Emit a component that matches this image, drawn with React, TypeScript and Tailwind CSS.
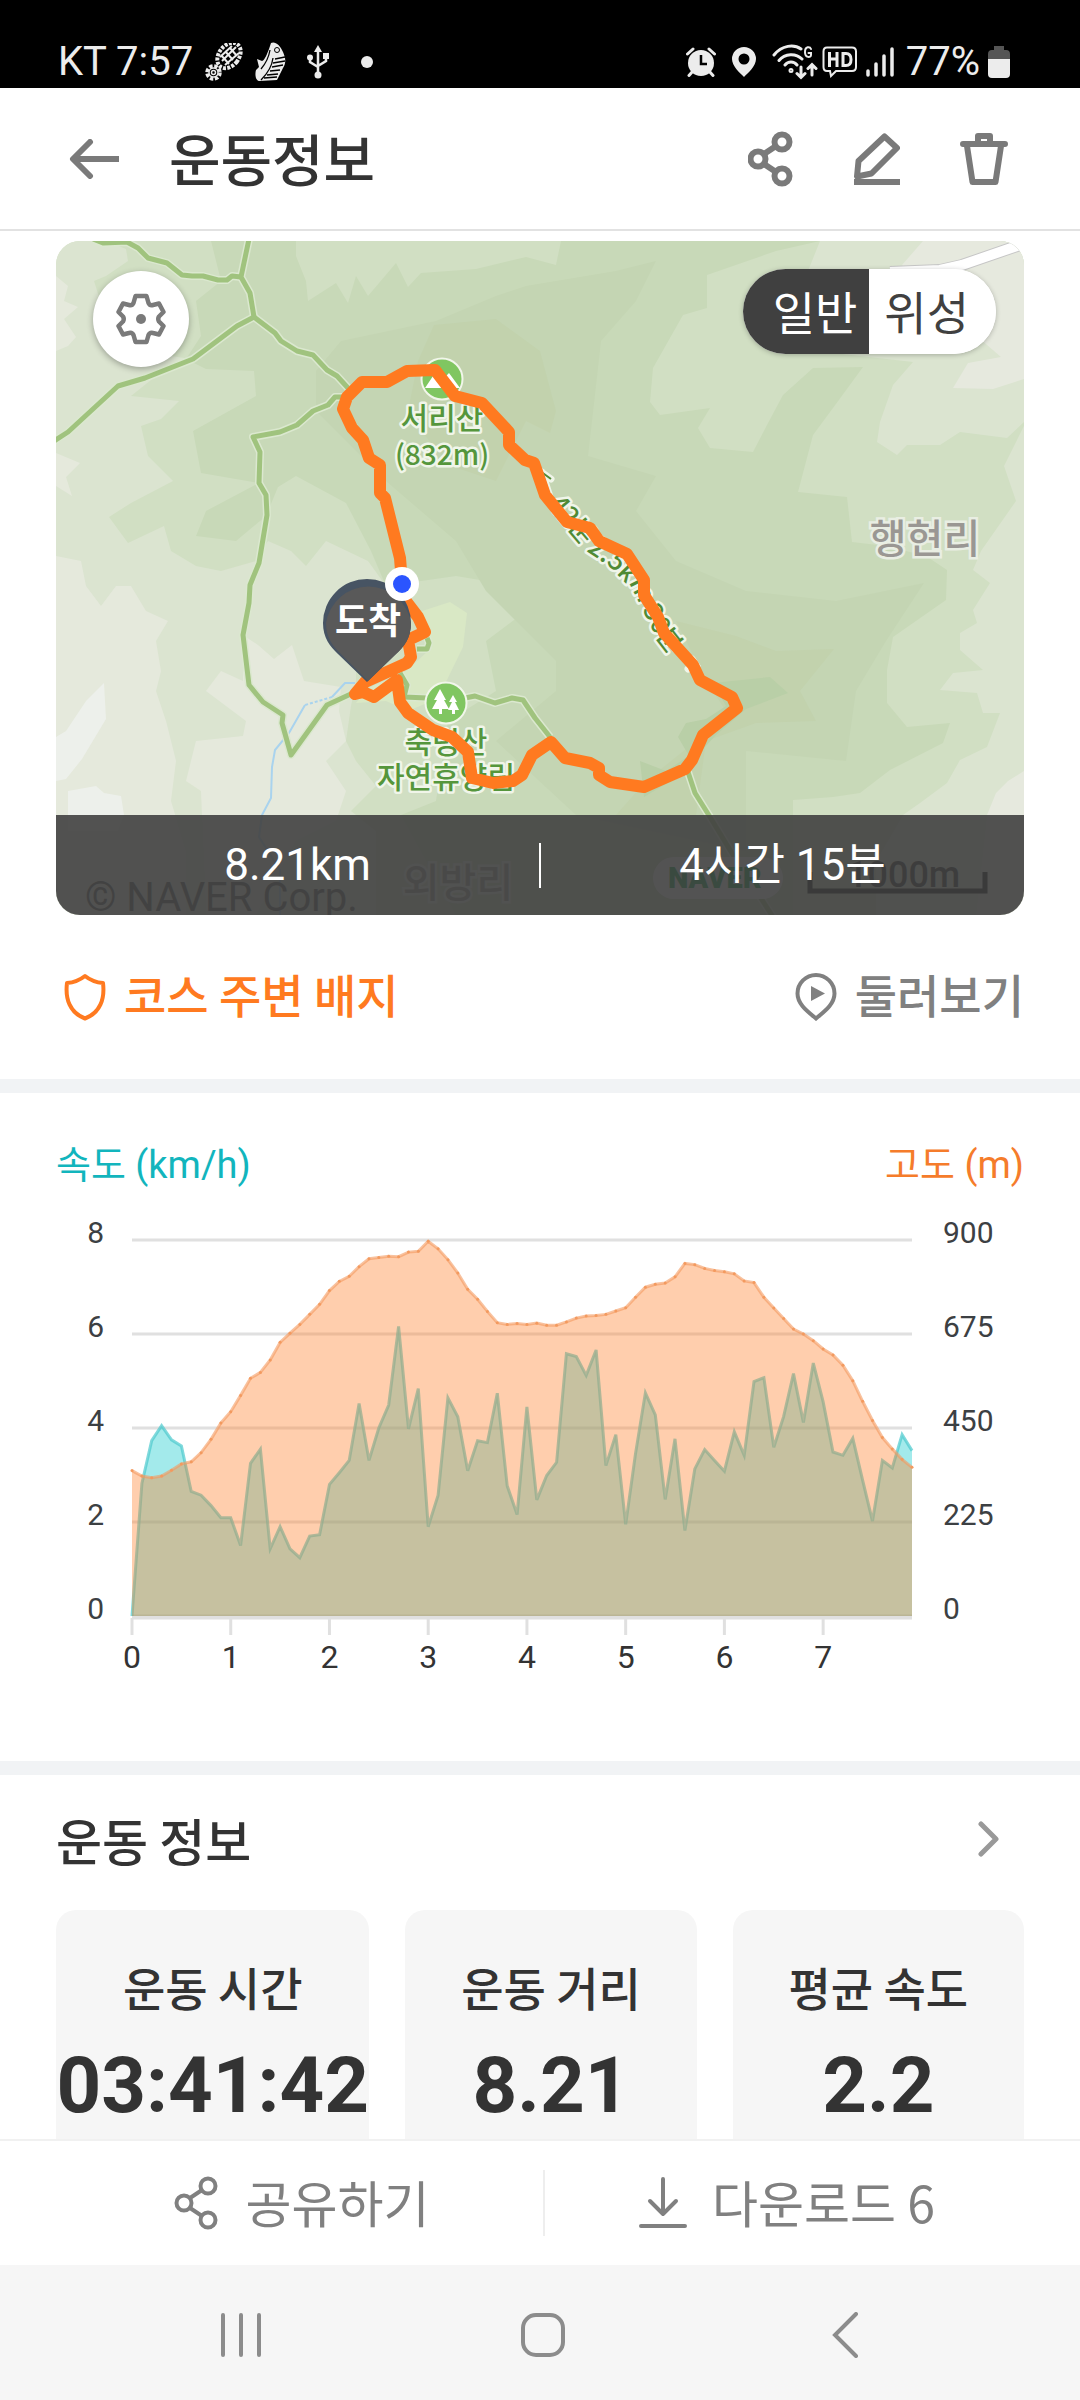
import { useState } from "react"

const speeds = [
  0, 2.82, 3.73, 4.05, 3.75, 3.62, 2.65, 2.57, 2.35, 2.09, 2.09, 1.5, 3.25, 3.55, 1.43, 1.9, 1.43, 1.24, 1.7, 1.73,
  2.8, 3.05, 3.31, 4.52, 3.31, 4, 4.49, 6.16, 3.98, 4.84, 1.9, 2.57, 4.64, 4.24, 3.09, 3.73, 3.69, 4.74, 2.77, 2.16,
  4.45, 2.47, 2.99, 3.27, 5.58, 5.52, 5.12, 5.66, 3.2, 3.86, 1.95, 3.45, 4.75, 4.28, 2.48, 3.77, 1.82, 3.13, 3.54, 3.31,
  3.08, 3.92, 3.42, 4.99, 5.07, 3.59, 4.24, 5.16, 4.12, 5.38, 4.56, 3.49, 3.42, 3.78, 2.89, 2.02, 3.31, 3.15, 3.86, 3.52,
]

const altitudes = [
  348, 335, 331, 335, 349, 364, 369, 391, 423, 462, 489, 528, 569, 583, 613, 655, 677, 698, 722, 746,
  779, 801, 813, 836, 855, 858, 861, 860, 871, 873, 897, 879, 853, 821, 782, 758, 729, 702, 698, 700,
  698, 701, 696, 696, 704, 713, 718, 719, 722, 730, 738, 763, 787, 794, 797, 812, 844, 841, 832, 827,
  824, 819, 802, 798, 763, 737, 712, 687, 675, 659, 639, 625, 600, 563, 514, 468, 427, 400, 375, 356,
]

const yTicks = [
  { speed: 8, altitude: 900 },
  { speed: 6, altitude: 675 },
  { speed: 4, altitude: 450 },
  { speed: 2, altitude: 225 },
  { speed: 0, altitude: 0 },
]

const stats = [
  { label: "운동 시간", value: "03:41:42" },
  { label: "운동 거리", value: "8.21" },
  { label: "평균 속도", value: "2.2" },
]

const terrain = [
  // low ground, west
  { fill: "#dbe4d0", d: "M0 0H50L70 8L72 20L50 35L38 40L45 62L95 112L135 118L100 135L75 155L123 160L105 178L85 185L92 215L117 240L75 262L53 276L72 302L108 285L115 310L140 325L165 330L200 320L212 300L235 310L250 325L270 300L312 320L330 345L330 380L300 400V440L295 465L290 500L300 520L320 545L295 570L320 590V674H0Z" },
  { fill: "#e5e9dc", d: "M0 35L12 45L8 60L22 66L8 78L20 96L12 105L0 110ZM0 212L24 222L10 236L16 255L0 245ZM0 315L25 320L30 345L45 365L60 345L75 345L90 370L112 380L100 400L105 430L100 450L110 480L120 520L115 560L130 610V674H0Z" },
  { fill: "#e5e9dc", d: "M187 394L202 404L218 418L236 404L248 440L285 446L283 470L290 500L270 520L290 550L280 580L240 600L200 674H150L145 550L130 540L140 500L187 495L190 480L150 450L165 430L187 440Z" },
  { fill: "#edf0eb", d: "M0 496L10 490L30 460L48 442L50 478L26 518L10 538L0 540ZM12 550L40 545L48 552L65 555L68 574L62 590H12Z" },
  // forest, centre
  { fill: "#c8d9b8", d: "M155 0H240V15L250 40L252 60L280 42L292 62L300 35L312 55L340 22L352 46L365 32L420 28L470 16L500 24L505 0H764L720 10L651 34V67L627 74L597 127L594 161L604 174L654 167L642 187L654 207L697 211L711 184L727 154L757 127L807 126L777 167L757 194L742 251L791 256L796 301L830 305L870 315L891 329L890 359L837 396L831 429V462L851 486L894 482L887 502L834 529L804 552L777 556L737 559V674H400L345 574L380 560L392 480L440 450L430 400L470 370L460 345L400 335L330 345L315 310L290 262L240 235L222 246L210 275L180 300L140 295L150 270L203 242L145 232L137 190L200 155L198 130L150 128L130 118L145 95L140 60L165 40Z" },
  { fill: "#c4d5b3", d: "M260 170V130L285 100L380 80L440 55L470 45L560 30L600 20L580 60L545 100L536 180L532 215L600 235L580 270L620 320L690 350L780 360L868 342L830 400L800 450L790 520L690 510L690 610L520 574L440 500L500 450L500 420L430 350L400 300L330 240Z" },
  { fill: "#c2d2ad", d: "M378 84L440 78L484 110L500 170L494 192L470 180L440 240L395 225L365 190L352 170L362 120ZM620 380L680 395L720 410L778 408L744 450L760 480L700 482L650 500L640 574H560L590 540L640 500L670 470L650 440Z" },
  { fill: "#b9cfa7", d: "M657 442L714 436L732 452L690 468L660 494L636 520L622 496L630 482L650 478L670 465ZM584 520L610 530L640 510L632 530L588 556Z" },
  // low ground, east
  { fill: "#dbe4d0", d: "M764 0L740 60L760 110L857 121L837 144L824 181L821 201L841 214L851 204H884L904 191L951 197L968 181V0ZM968 185L948 225L960 260L925 310L917 329L934 342L917 369L921 382L904 392V409L927 429L897 432L884 449L921 452L927 472H944L931 506L904 519L891 542L864 562L847 574L820 620V674H968Z" },
  { fill: "#e6e9de", d: "M867 0L846 24L880 60L945 116L912 122L897 147L937 148L968 138V0ZM968 530L952 540L940 552L931 574L920 674H968Z" },
  { fill: "#d9e8c5", d: "M360 372L394 361L411 372L407 406L391 439L371 462L352 470L330 460L300 462L310 448L350 430L372 410Z" },
]

const trails = [
  "M37 -2L47 2L71 1L82 7L92 17L111 22L126 34L136 35H147L162 39H171L176 35L185 36",
  "M193 -2L185 36L194 52L198 76",
  "M198 76L181 85L137 118L89 137L62 145L12 191L-2 200",
  "M198 76L219 92L225 100L241 110L257 114L271 129L281 135L292 147",
  "M291 156H279L272 164L257 170L241 184L224 191L197 196L204 211L203 242L210 254L211 274L203 322L194 344L193 362L187 394L193 444L207 461L227 474L226 482L235 514L271 464L297 452",
  "M361 408H371L373 402L371 397",
  "M344 432L351 444L348 456L371 457H409L419 455L439 462L456 457L467 459L479 477L494 496",
  "M632 531L639 552L654 576L674 609L717 676",
  "M681 467L647 497",
]

const route =
  "M346 342L344 317L329 257L324 252V224L313 217L307 199L296 187L287 168L291 156L306 141H331L351 130L379 129L399 155L426 162L453 191V204L469 219L478 222L489 254L511 281L534 287L543 300L571 313L588 339V354L602 376L608 392L637 424L644 439L676 456L681 467L647 494L636 519L629 528L588 546L554 541L543 534V527L534 522L509 517L495 501L476 514L466 534L457 540L437 542L416 537L412 511L396 496L377 489L352 472L344 461L341 439L318 456L307 451L299 453L309 441L351 422L355 416L352 399L369 391L362 376L349 359Z"

function ShareIcon({ className, strokeWidth }: { className: string; strokeWidth: number }) {
  return (
    <svg viewBox="0 0 46 56" className={className} fill="none" stroke="currentColor" strokeWidth={strokeWidth}>
      <circle cx="34" cy="11" r="7.5" />
      <circle cx="10" cy="28" r="7.5" />
      <circle cx="34" cy="45" r="7.5" />
      <path d="M16 23L28 15M16 33L28 41" />
    </svg>
  )
}

function StatusBar() {
  return (
    <div className="flex h-[88px] shrink-0 items-center justify-between bg-black pt-9 pl-[58px] pr-[70px] font-[Roboto,sans-serif] text-[40px] leading-none text-[#ececec]">
      <div className="flex items-center">
        <span>KT 7:57</span>
        {/* Boot print */}
        <svg viewBox="0 0 38 38" className="ml-3 h-[38px] w-[38px]" fill="none" stroke="currentColor">
          <ellipse cx="24" cy="12.500" rx="10" ry="14" transform="rotate(38 24 12.5)" strokeWidth="4" strokeDasharray="3 1.300" />
          <path d="M17 18L31 4M15 14L27 3M20 22L34 10M20 8L28 17M25 5L32 13M16 12L24 21" strokeWidth="2" />
          <circle cx="8.500" cy="29.500" r="6.500" strokeWidth="3.500" strokeDasharray="3.400 1.700" />
          <circle cx="8.500" cy="29.500" r="4.500" strokeWidth="1.500" />
          <circle cx="8.500" cy="29.500" r="2" strokeWidth="1.500" />
        </svg>
        {/* Shoe */}
        <svg viewBox="0 0 32 40" className="ml-3 h-10 w-8">
          <path d="M16 1C20 -1 25 3 28 10C31 17 31 21 28 26L22 38L4 39C0 38 0 31 1 28L4 25L2 17L7 19C10 18 12 12 14 7Z" fill="currentColor" />
          <path d="M18 16C17 24 12 32 6 38M15 8C14 14 12 20 6 27M20 17L30 15M18 21L30 19M17 25L28 23M15 29L25 28M12 33L23 32M9 36L22 35" fill="none" stroke="#000" strokeWidth="1.300" />
          <circle cx="22" cy="8" r="2.500" fill="none" stroke="#000" />
        </svg>
        {/* USB */}
        <svg viewBox="0 0 22 34" className="ml-5 h-[34px] w-[22px]" fill="currentColor">
          <path d="M11 0L15 7H7Z" />
          <circle cx="11" cy="30" r="3.500" />
          <circle cx="3" cy="12.500" r="3" />
          <rect x="16" y="8" width="6" height="6" />
          <path d="M11 5V29M3 12V17L11 22M19 12V16L11 21" fill="none" stroke="currentColor" strokeWidth="2.500" />
        </svg>
        <span className="ml-8 h-3 w-3 rounded-full bg-[#ececec]" />
      </div>

      <div className="flex items-center">
        {/* Alarm */}
        <svg viewBox="0 0 30 30" className="h-[30px] w-[30px]">
          <circle cx="15" cy="16" r="13" fill="currentColor" />
          <path d="M1.500 7L7 2M28.500 7L23 2M3 28.500L7 24M27 28.500L23 24" stroke="currentColor" strokeWidth="3" strokeLinecap="round" />
          <path d="M15 8V17H21" fill="none" stroke="#000" strokeWidth="2.500" />
        </svg>
        {/* Location */}
        <svg viewBox="0 0 24 30" className="ml-4 h-[30px] w-6" fill="currentColor" fillRule="evenodd">
          <path d="M12 0A12 12 0 0 1 24 12C24 19 16 26 12 30C8 26 0 19 0 12A12 12 0 0 1 12 0ZM12 6.500A5.500 5.500 0 1 0 12 17.500A5.500 5.500 0 1 0 12 6.500Z" />
        </svg>
        {/* Wi-Fi */}
        <svg viewBox="0 0 46 36" className="ml-4 h-9 w-[46px]" fill="none" stroke="currentColor" strokeWidth="3" strokeLinecap="round">
          <path d="M2 11C10 1 22 0 29 5M7 16.500C13 9 24 9 30 15M13 21C16 17 22 17 25 21" />
          <circle cx="19" cy="26.500" r="1" />
          <path d="M39 5C38 2.500 33 2 33 8C33 14 39 14 39 11V9H36.500" strokeWidth="2" />
          <path d="M29 23V33M25 29.500L29 33.500L33 29.500M40 31V21M36 24.500L40 20.500L44 24.500" />
        </svg>
        {/* HD voice */}
        <svg viewBox="0 0 36 32" className="ml-1 h-8 w-9" fill="none" stroke="currentColor">
          <path d="M5 1.500H30Q34 1.500 34 5.500V21Q34 25 30 25H14L9 30L8 25H5Q1.500 25 1.500 21V5.500Q1.500 1.500 5 1.500Z" strokeWidth="2" />
          <path d="M7.500 6V21M15 6V21M7.500 13H15M21 7.500V19.500H24Q29 19.500 29 13.500Q29 7.500 24 7.500Z" strokeWidth="3" />
        </svg>
        {/* Signal */}
        <svg viewBox="0 0 28 30" className="ml-2 h-[30px] w-7" stroke="currentColor" strokeWidth="3.500" strokeLinecap="round">
          <path d="M2 24V28M10 17V28M18 9V28M26 2V28" />
        </svg>
        <span className="ml-3">77%</span>
        {/* Battery */}
        <svg viewBox="0 0 22 32" className="ml-2 h-8 w-[22px]">
          <path d="M6 0H16V4H18Q22 4 22 8V13H0V8Q0 4 4 4H6Z" fill="#555" />
          <path d="M0 13H22V28Q22 32 18 32H4Q0 32 0 28Z" fill="currentColor" />
        </svg>
      </div>
    </div>
  )
}

function Header() {
  return (
    <header className="flex h-[143px] shrink-0 items-center border-b-2 border-[#e2e2e2] pl-[69px] pr-[72px] text-[#7a7a7a]">
      <button type="button" aria-label="뒤로">
        <svg viewBox="0 0 50 40" className="h-10 w-[50px]" fill="none" stroke="currentColor" strokeWidth="6">
          <path d="M50 20H6" />
          <path d="M21 3L4 20L21 37" strokeLinecap="round" strokeLinejoin="round" />
        </svg>
      </button>
      <h1 className="ml-[50px] flex-1 pb-1 text-[56px] leading-[80px] font-medium text-[#333]">운동정보</h1>
      <div className="flex items-center gap-[60px]">
        <button type="button" aria-label="공유">
          <ShareIcon className="h-14 w-[46px]" strokeWidth={6} />
        </button>
        <button type="button" aria-label="수정">
          <svg viewBox="0 0 46 52" className="h-[52px] w-[46px]" fill="none" stroke="currentColor" strokeWidth="6" strokeLinejoin="round">
            <path d="M30.500 3.500L43 15L17.500 40.500L3 43.500L4.500 28Z" />
            <path d="M0 49H46" />
          </svg>
        </button>
        <button type="button" aria-label="삭제">
          <svg viewBox="0 0 48 52" className="h-[52px] w-12" fill="none" stroke="currentColor" strokeWidth="6" strokeLinejoin="round" strokeLinecap="round">
            <path d="M3 11H45M18 10V3H30V10" />
            <path d="M7 13L12.500 49H35.500L41 13" />
          </svg>
        </button>
      </div>
    </header>
  )
}

function RouteMap() {
  return (
    <svg viewBox="0 0 968 674" className="block w-full" role="img" aria-label="코스 지도">
      <rect width="968" height="674" fill="#d1dfc3" />
      {terrain.map((shape) => (
        <path key={shape.d} d={shape.d} fill={shape.fill} />
      ))}

      {/* Stream */}
      <g fill="none" stroke="#a9d3ee" strokeWidth="2">
        <path d="M299 442H289L276 456" />
        <path d="M276 456L249 464" strokeDasharray="3 2" />
        <path d="M249 464L233 492L219 509L216 526L215 557L206 574L203 596L224 629V674" />
      </g>

      {/* Road */}
      <path d="M834 31L884 29L906 24L961 5L984 -3" fill="none" stroke="#c6c6c6" strokeWidth="12" />
      <path d="M834 31L884 29L906 24L961 5L984 -3" fill="none" stroke="#fff" strokeWidth="10" />

      <g fill="none" strokeLinejoin="round">
        {trails.map((d) => (
          <path key={d} d={d} stroke="#dbe8cf" strokeWidth="8" />
        ))}
        {trails.map((d) => (
          <path key={d} d={d} stroke="#a0c37e" strokeWidth="5" />
        ))}
      </g>

      {/* Place icons */}
      <g stroke="#f1f6ea" strokeWidth="2" fill="#80c661">
        <circle cx="386" cy="138" r="20.500" />
        <circle cx="390" cy="462" r="20.500" />
      </g>
      <path d="M369 147L381 129L387 138L393 132L404 147Z" fill="#fff" />
      <path d="M384 448L390 459H388L393 468H386V473H383V468H376L381 459H378ZM397 454L401 461H399L403 469H399V473H396V469H392L396 461H393Z" fill="#fff" />

      <g
        className="font-['Noto_Sans_CJK_KR',sans-serif] text-[30px] font-medium"
        textAnchor="middle"
        fill="#55963c"
        stroke="#f0f5e9"
        strokeWidth="5"
        strokeLinejoin="round"
        paintOrder="stroke"
      >
        <text x="386" y="188">서리산</text>
        <text x="386" y="224" className="text-[28px]">(832m)</text>
        <text x="390" y="512">축령산</text>
        <text x="390" y="547">자연휴양림</text>
      </g>

      {/* Trail time label with its direction arrows */}
      <path
        d="M484 230L495 238M486 231L496 262M636 418L640 424L632 428"
        fill="none"
        stroke="#f0f5e9"
        strokeWidth="7"
        strokeLinecap="round"
      />
      <path d="M484 230L495 238M486 231L496 262" fill="none" stroke="#4f8a35" strokeWidth="2" />
      <path id="trail-label" d="M492 264L524 302L536 314L553 325L577 350L588 372L602 399L635 442" fill="none" />
      <text
        className="font-['Noto_Sans_CJK_KR',sans-serif] text-[26px] font-medium"
        fill="#4f8a35"
        stroke="#f0f5e9"
        strokeWidth="5"
        strokeLinejoin="round"
        paintOrder="stroke"
      >
        <textPath href="#trail-label">42분 2.5km 30분</textPath>
      </text>
      <g
        className="font-['Noto_Sans_CJK_KR',sans-serif] text-[40px] font-medium"
        textAnchor="middle"
        fill="#9a9793"
        stroke="#e9eee3"
        strokeWidth="5"
        paintOrder="stroke"
      >
        <text x="869" y="312">행현리</text>
        <text x="402" y="656">외방리</text>
      </g>

      {/* Attribution and scale */}
      <text x="29" y="670" className="font-[Roboto,sans-serif] text-[40px]" fill="#555">© NAVER Corp.</text>
      <rect x="597" y="616" width="130" height="42" rx="21" fill="#fff" />
      <text x="612" y="647" className="font-[Roboto,sans-serif] text-[29px] font-black" fill="#03a03c">NAVER</text>
      <text x="791" y="646" className="font-[Roboto,sans-serif] text-[36px] font-medium" fill="#222">1000m</text>
      <path d="M754 631V650H929V631" fill="none" stroke="#000" strokeWidth="5" />

      <path d={route} fill="none" stroke="#ff7a20" strokeWidth="12" strokeLinejoin="round" />

      {/* Arrival pin */}
      <path d="M267 382A44 44 0 0 1 355 382C355 397 348 406 340 413L311 441L282 413C274 405 267 397 267 382Z" fill="#475463" />
      <path d="M270 382A43 43 0 0 1 355 382C355 397 348 406 340 413L312 440L285 413C277 405 270 397 270 382Z" fill="#595959" />
      <text x="312" y="393" textAnchor="middle" className="font-['Noto_Sans_CJK_KR',sans-serif] text-[36px] font-bold" fill="#fff">도착</text>
      <circle cx="346" cy="343" r="17" fill="#fff" />
      <circle cx="346" cy="343" r="9" fill="#2b55ff" />
    </svg>
  )
}

function MapCard() {
  const [mapType, setMapType] = useState("일반")

  return (
    <div className="relative mx-14 mt-[10px] overflow-hidden rounded-3xl">
      <RouteMap />

      <button
        type="button"
        aria-label="지도 설정"
        className="absolute top-[30px] left-[37px] flex h-24 w-24 items-center justify-center rounded-full bg-white text-[#7a7a7a] shadow-[0_2px_6px_rgba(0,0,0,0.3)]"
      >
        <svg viewBox="0 0 50 52" className="h-[52px] w-[50px]" fill="none" stroke="currentColor" strokeWidth="4.500" strokeLinejoin="round">
          <path d="M19.500 3H30.500L32.500 10Q34 13 37 12L43 10.500L47.500 19L43 23.500Q41.500 26 43 28.500L47.500 33L43 41.500L37 40Q34 39 32.500 42L30.500 49H19.500L17.500 42Q16 39 13 40L7 41.500L2.500 33L7 28.500Q8.500 26 7 23.500L2.500 19L7 10.500L13 12Q16 13 17.500 10Z" />
          <circle cx="25" cy="26" r="5" fill="currentColor" stroke="none" />
        </svg>
      </button>

      <div className="absolute top-7 right-7 flex h-[85px] overflow-hidden rounded-full bg-white text-[46px] leading-none shadow-[0_1px_5px_rgba(0,0,0,0.25)]">
        {["일반", "위성"].map((type) => (
          <button
            key={type}
            type="button"
            aria-pressed={mapType === type}
            onClick={() => setMapType(type)}
            className={`pb-1 first:pl-[30px] first:pr-3 last:pl-[15px] last:pr-[27px] ${
              mapType === type ? "bg-[#404040] text-white" : "bg-white text-[#404040]"
            }`}
          >
            {type}
          </button>
        ))}
      </div>

      <div className="absolute inset-x-0 bottom-0 flex h-[100px] items-center bg-[#404040]/90 font-[Roboto,'Noto_Sans_CJK_KR',sans-serif] text-[44px] leading-none text-white">
        <span className="flex-1 text-center">8.21km</span>
        <span className="h-[45px] w-[2px] bg-white" />
        <span className="flex-1 text-center">4시간 15분</span>
      </div>
    </div>
  )
}

const x = (i: number) => 76 + (i * 780) / 79
const y = (value: number, max: number) => 399 - (value / max) * 376
const linePath = (values: number[], max: number) =>
  values.map((v, i) => `${i === 0 ? "M" : "L"}${x(i).toFixed(1)} ${y(v, max).toFixed(1)}`).join("")

function ElevationChart() {
  const speedLine = linePath(speeds, 8)
  const altitudeLine = linePath(altitudes, 900)

  return (
    <svg viewBox="0 0 968 474" className="mt-6 block w-full" role="img" aria-label="속도와 고도">
      {yTicks.map((tick) => (
        <path key={tick.speed} d={`M76 ${y(tick.speed, 8)}H856`} stroke="#e0e0e0" strokeWidth="3" />
      ))}
      <path d="M76 401H856" stroke="#e0e0e0" strokeWidth="3" />

      <path d={`${speedLine}V399H76Z`} fill="#0dc8ca" fillOpacity="0.38" />
      <path d={speedLine} fill="none" stroke="#4cc9cd" strokeOpacity="0.7" strokeWidth="3" />
      <path d={`${altitudeLine}V399H76Z`} fill="#ff7d28" fillOpacity="0.38" />
      <path d={altitudeLine} fill="none" stroke="#f39a5f" strokeOpacity="0.6" strokeWidth="3" />
      {altitudes.map((v, i) => (
        <circle key={i} cx={x(i)} cy={y(v, 900)} r="1.500" fill="#f39a5f" />
      ))}

      <g className="font-[Roboto,sans-serif] text-[30px]" fill="#3c4043">
        {yTicks.map((tick) => (
          <g key={tick.speed}>
            <text x="48" y={y(tick.speed, 8) + 3} textAnchor="end">{tick.speed}</text>
            <text x="887" y={y(tick.speed, 8) + 3}>{tick.altitude}</text>
          </g>
        ))}
      </g>
      <g className="font-[Roboto,sans-serif] text-[32px]" fill="#333" textAnchor="middle">
        {[0, 1, 2, 3, 4, 5, 6, 7].map((km) => (
          <g key={km}>
            <path d={`M${x(km * 10)} 401V418`} stroke="#e0e0e0" strokeWidth="3" />
            <text x={x(km * 10)} y="451">{km}</text>
          </g>
        ))}
      </g>
    </svg>
  )
}

export default function App() {
  return (
    <div className="flex h-screen flex-col overflow-hidden bg-white font-['Noto_Sans_CJK_KR',sans-serif] text-[#333]">
      <StatusBar />
      <Header />

      <main className="min-h-0 flex-1 overflow-y-auto [scrollbar-width:none]">
        <section>
          <MapCard />
          <div className="mx-14 flex h-[164px] items-center justify-between text-[46px] leading-[64px] font-medium">
            <a href="#badges" className="flex items-center text-[#ff7a20]">
              <svg viewBox="0 0 42 48" className="ml-2 mr-[18px] h-12 w-[42px]" fill="none" stroke="currentColor" strokeWidth="4" strokeLinejoin="round">
                <path d="M21 3C26 7 32 9.500 39 10C41 26 36 40 21 45.500C6 40 1 26 3 10C10 9.500 16 7 21 3Z" />
              </svg>
              <span className="pb-2">코스 주변 배지</span>
            </a>
            <a href="#tour" className="flex items-center text-[#808080]">
              <svg viewBox="0 0 42 48" className="mr-[18px] h-12 w-[42px]" fill="none" stroke="currentColor" strokeWidth="4">
                <path d="M21 45.500C12 38 2.500 31 2.500 20.500A18.500 18.500 0 0 1 39.500 20.500C39.500 31 30 38 21 45.500Z" />
                <path d="M16 13V28L30 20.500Z" fill="currentColor" stroke="none" />
              </svg>
              <span className="pb-2">둘러보기</span>
            </a>
          </div>
        </section>

        <section className="border-t-[14px] border-[#f1f3f5] px-14 pt-[44px] pb-[70px]">
          <div className="flex justify-between font-[Roboto,'Noto_Sans_CJK_KR',sans-serif] text-[38px] leading-[56px]">
            <span className="text-[#12b5bd]">속도 (km/h)</span>
            <span className="text-[#f57c2b]">고도 (m)</span>
          </div>
          <ElevationChart />
        </section>

        <section className="border-t-[14px] border-[#f1f3f5] px-14">
          <div className="flex h-[135px] items-center justify-between pb-2">
            <h2 className="text-[50px] leading-[72px] font-medium">운동 정보</h2>
            <button type="button" aria-label="운동 정보 더보기" className="mr-6 text-[#999]">
              <svg viewBox="0 0 22 36" className="h-9 w-[22px]" fill="none" stroke="currentColor" strokeWidth="5" strokeLinecap="round" strokeLinejoin="round">
                <path d="M3 3L18 18L3 33" />
              </svg>
            </button>
          </div>
          <dl className="grid grid-cols-[312fr_290fr_290fr] gap-9">
            {stats.map((stat) => (
              <div key={stat.label} className="rounded-[20px] bg-[#f6f6f6] pt-[46px] pb-24 text-center">
                <dt className="text-[46px] leading-[60px] font-medium">{stat.label}</dt>
                <dd className="mt-5 font-[Roboto,sans-serif] text-[78px] leading-[100px] font-bold">{stat.value}</dd>
              </div>
            ))}
          </dl>
        </section>
      </main>

      <footer className="flex h-[126px] shrink-0 items-center border-t-2 border-[#f1f1f1] bg-white pr-[52px] pl-[60px] text-[50px] leading-[72px] text-[#808080]">
        <button type="button" className="flex flex-1 items-center justify-center gap-[26px]">
          <ShareIcon className="h-[56px] w-[46px]" strokeWidth={4} />
          <span className="pb-1">공유하기</span>
        </button>
        <span className="h-[66px] w-[2px] bg-[#eee]" />
        <button type="button" className="flex flex-1 items-center justify-center gap-6">
          <svg viewBox="0 0 50 52" className="h-[52px] w-[50px]" fill="none" stroke="currentColor" strokeWidth="4" strokeLinecap="round" strokeLinejoin="round">
            <path d="M25 2V37M12 24L25 37L38 24M3 49H47" />
          </svg>
          <span className="pb-1">다운로드 6</span>
        </button>
      </footer>

      <nav className="grid h-[135px] shrink-0 grid-cols-3 items-center justify-items-center bg-[#f6f6f6] pt-1 pr-[84px] pl-[90px] text-[#8c8c8c]">
        <button type="button" aria-label="최근 앱">
          <svg viewBox="0 0 42 46" className="h-[46px] w-[42px]" stroke="currentColor" strokeWidth="4" strokeLinecap="round">
            <path d="M3 3V43M21 3V43M39 3V43" />
          </svg>
        </button>
        <button type="button" aria-label="홈">
          <svg viewBox="0 0 46 46" className="h-[46px] w-[46px]" fill="none" stroke="currentColor" strokeWidth="4">
            <rect x="3" y="3" width="40" height="40" rx="13" />
          </svg>
        </button>
        <button type="button" aria-label="뒤로 가기">
          <svg viewBox="0 0 28 46" className="h-[46px] w-7" fill="none" stroke="currentColor" strokeWidth="4" strokeLinecap="round">
            <path d="M25 2L4 23L25 44" />
          </svg>
        </button>
      </nav>
    </div>
  )
}
